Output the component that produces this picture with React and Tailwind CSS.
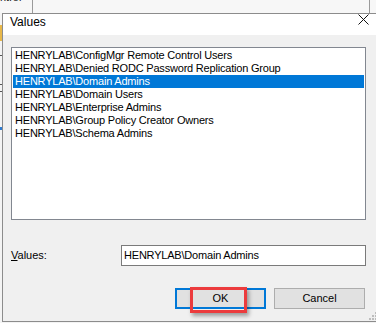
import React from 'react';

const items = [
  'HENRYLAB\\ConfigMgr Remote Control Users',
  'HENRYLAB\\Denied RODC Password Replication Group',
  'HENRYLAB\\Domain Admins',
  'HENRYLAB\\Domain Users',
  'HENRYLAB\\Enterprise Admins',
  'HENRYLAB\\Group Policy Creator Owners',
  'HENRYLAB\\Schema Admins',
];

function CloseIcon() {
  return (
    <svg width="11" height="11" viewBox="0 0 11 11" className="block">
      <path d="M0.5 0.5 L10.5 10.5 M10.5 0.5 L0.5 10.5" stroke="#111" strokeWidth="1" />
    </svg>
  );
}

function Grip() {
  return (
    <svg width="8" height="8" viewBox="0 0 8 8" className="block">
      {[[6, 0], [6, 3], [3, 3], [6, 6], [3, 6], [0, 6]].map(([x, y]) => (
        <rect key={`${x}-${y}`} x={x} y={y} width="2" height="2" fill="#bdbdbd" />
      ))}
    </svg>
  );
}

export default function App() {
  const selected = 2;

  return (
    <div
      className="relative flex h-[323px] w-[376px] flex-col overflow-hidden bg-[#f3f3f3] text-black"
      style={{ fontFamily: '"Liberation Sans", Arial, sans-serif' }}
    >
      {/* background window strip */}
      <div className="relative h-[13px] shrink-0 bg-[#f7f7f7]">
        <span className="absolute -top-[9px] left-0 text-[11px] leading-[13px] text-[#222]">ntrol</span>
        <div className="absolute left-[32px] top-0 h-[13px] w-px bg-[#9a9a9a]" />
        <div className="absolute left-[369px] top-0 h-[13px] w-px bg-[#9a9a9a]" />
      </div>

      <div className="flex min-h-0 flex-1">
        {/* left sliver of window behind */}
        <div className="flex w-[2px] shrink-0 flex-col bg-[#f4f4f4]">
          <div className="mt-[12px] h-[16px] bg-[#e8b84a]" />
          <div className="mt-[14px] h-px bg-[#555]" />
          <div className="mt-[28px] h-px bg-[#555]" />
          <div className="mt-[6px] h-px bg-[#555]" />
          <div className="mt-[35px] h-[3px] bg-[#2f7bd0]" />
        </div>

        {/* dialog */}
        <div className="flex h-[309px] w-[380px] shrink-0 flex-col border-b border-l border-t border-[#8c8c8c] bg-[#f0f0f0]">
          <div className="flex h-[21px] shrink-0 items-start justify-between bg-white">
            <span className="ml-[7px] mt-[1px] text-[12px] leading-[14px]">Values</span>
            <div className="mr-[13px] mt-0">
              <CloseIcon />
            </div>
          </div>

          <div className="relative flex flex-1 flex-col pl-[8px]">
            <div className="mt-[12px] h-[173px] w-[355px] border border-[#828790] bg-white p-px">
              {items.map((item, i) => (
                <div
                  key={item}
                  className={`h-[13px] whitespace-nowrap pl-[2px] text-[11px] leading-[13px] tracking-[-0.2px] ${
                    i === selected ? 'bg-[#0078d7] text-white' : 'text-black'
                  }`}
                >
                  {item}
                </div>
              ))}
            </div>

            <div className="mt-[25px] flex items-center">
              <span className="w-[110px] text-[11px] leading-[13px]">
                <span className="underline">V</span>alues:
              </span>
              <div className="flex h-[21px] w-[245px] items-center border border-[#7a7a7a] bg-white pl-[2px] text-[11px] tracking-[-0.2px]">
                HENRYLAB\Domain Admins
              </div>
            </div>

            <div className="mt-[22px] flex gap-[8px] pl-[164px]">
              <div className="flex h-[21px] w-[91px] items-center justify-center border-2 border-[#0078d7] bg-[#e1e1e1] text-[11px]">
                OK
              </div>
              <div className="flex h-[21px] w-[91px] items-center justify-center border border-[#adadad] bg-[#e1e1e1] text-[11px]">
                Cancel
              </div>
            </div>

            <div className="absolute bottom-[1px] left-[366px]">
              <Grip />
            </div>
          </div>
        </div>
      </div>

      {/* highlight annotation */}
      <div className="absolute left-[190px] top-[287px] h-[26px] w-[57px] border-[3px] border-[#ec3b3d] shadow-[2px_3px_4px_rgba(0,0,0,0.35)]" />
    </div>
  );
}
